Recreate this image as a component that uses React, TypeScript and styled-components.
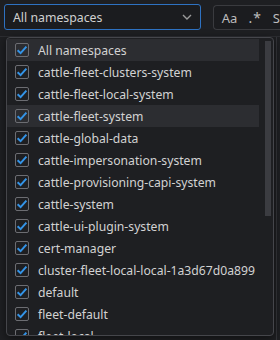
import styled, { createGlobalStyle } from 'styled-components'

const GlobalStyle = createGlobalStyle`
  html, body {
    margin: 0;
    padding: 0;
    background: #1e1f22;
    font-family: "Noto Sans", "Open Sans", sans-serif;
    color: #cccccc;
    overflow: hidden;
  }
`

const Page = styled.div`
  position: relative;
  width: 280px;
  height: 340px;
  overflow: hidden;
`

const Toolbar = styled.div`
  display: flex;
  align-items: flex-start;
  gap: 12px;
  padding: 4px 0 0 4px;
  height: 37px;
  box-sizing: border-box;
  border-bottom: 1px solid #2c2d31;
`

const Select = styled.div`
  width: 199px;
  height: 26px;
  box-sizing: border-box;
  border: 1px solid #2e72c2;
  border-radius: 3px;
  background: #1b1c1f;
  display: flex;
  align-items: center;
  justify-content: space-between;
  padding: 0 8px 0 8px;
  font-size: 12.3px;
  color: #d0d0d0;
`

const SearchBox = styled.div`
  flex: 1;
  height: 25px;
  margin-top: 1px;
  box-sizing: border-box;
  border: 1px solid #3a3b3f;
  border-right: none;
  border-radius: 4px 0 0 4px;
  background: #1b1c1f;
  display: flex;
  align-items: center;
  gap: 11px;
  padding-left: 8px;
  font-size: 13px;
  color: #bdbdbd;
  white-space: nowrap;
`

const Regex = styled.span`
  font-size: 14px;
  letter-spacing: 1px;
`

const Behind = styled.div`
  height: 303px;
  margin-right: 3px;
  border-right: 1px solid #34353a;
`

const Panel = styled.div`
  position: absolute;
  left: 6px;
  top: 37px;
  width: 268px;
  height: 299px;
  box-sizing: border-box;
  border: 1px solid #45464b;
  border-radius: 4px;
  background: #1e1f22;
  display: flex;
  box-shadow: 0 2px 8px rgba(0, 0, 0, 0.5);
  overflow: hidden;
`

const List = styled.div`
  flex: 1;
  padding-top: 1px;
  display: flex;
  flex-direction: column;
`

const Row = styled.div<{ $active?: boolean }>`
  height: 22px;
  flex: none;
  display: flex;
  align-items: center;
  gap: 9px;
  padding-left: 8px;
  background: ${p => (p.$active ? '#2c2d31' : 'transparent')};
  font-size: 12.2px;
  color: #d2d2d2;
  white-space: nowrap;
`

const Box = styled.span`
  width: 14px;
  height: 14px;
  box-sizing: border-box;
  border: 1px solid #6c6d72;
  border-radius: 2px;
  display: flex;
  align-items: center;
  justify-content: center;
  flex: none;
`

const Track = styled.div`
  width: 14px;
  flex: none;
  padding: 3px 0 0 6px;
  box-sizing: border-box;
`

const Thumb = styled.div`
  width: 6px;
  height: 175px;
  background: #3b3c41;
`

const items = [
  'All namespaces',
  'cattle-fleet-clusters-system',
  'cattle-fleet-local-system',
  'cattle-fleet-system',
  'cattle-global-data',
  'cattle-impersonation-system',
  'cattle-provisioning-capi-system',
  'cattle-system',
  'cattle-ui-plugin-system',
  'cert-manager',
  'cluster-fleet-local-local-1a3d67d0a899',
  'default',
  'fleet-default',
  'fleet-local',
]

const Check = () => (
  <svg width="12" height="12" viewBox="0 0 12 12">
    <path d="M1.6 6.2 L4.6 9.1 L10.4 2.6" fill="none" stroke="#3393e6" strokeWidth="2" />
  </svg>
)

const Chevron = () => (
  <svg width="10" height="6" viewBox="0 0 10 6">
    <path d="M1 1 L5 5 L9 1" fill="none" stroke="#9a9a9a" strokeWidth="1.4" />
  </svg>
)

export default function App() {
  return (
    <Page>
      <GlobalStyle />
      <Toolbar>
        <Select>
          <span>All namespaces</span>
          <Chevron />
        </Select>
        <SearchBox>
          <span>Aa</span>
          <Regex>.*</Regex>
          <span>S</span>
        </SearchBox>
      </Toolbar>
      <Behind />
      <Panel>
        <List>
          {items.map((name, i) => (
            <Row key={name} $active={i === 0 || i === 3}>
              <Box>
                <Check />
              </Box>
              {name}
            </Row>
          ))}
        </List>
        <Track>
          <Thumb />
        </Track>
      </Panel>
    </Page>
  )
}
